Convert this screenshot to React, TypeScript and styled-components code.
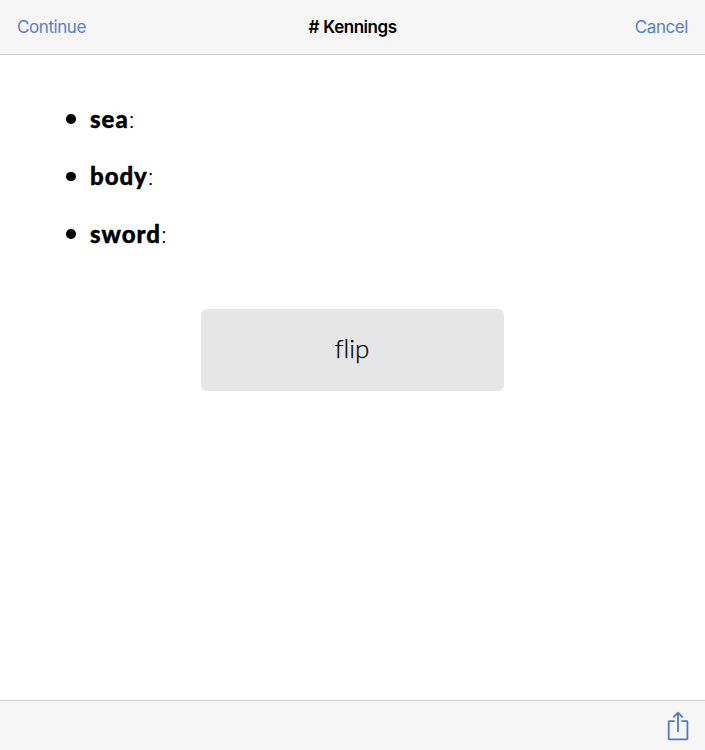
import React from "react";
import styled, { createGlobalStyle } from "styled-components";

const GlobalStyle = createGlobalStyle`
  * { box-sizing: border-box; }
  body { margin: 0; background: #fff; color: #000; }
`;

const Screen = styled.div`
  display: flex;
  flex-direction: column;
  height: 100vh;
  min-height: 750px;
  background: #fff;
  font-family: Inter, "Liberation Sans", sans-serif;
`;

const NavBar = styled.header`
  display: grid;
  grid-template-columns: 1fr auto 1fr;
  align-items: center;
  height: 55px;
  padding: 0 17px;
  background: #f6f6f6;
  border-bottom: 1px solid #cfcfcf;
`;

const NavButton = styled.button<{ $end?: boolean }>`
  justify-self: ${({ $end }) => ($end ? "end" : "start")};
  padding: 0;
  border: 0;
  background: none;
  color: #5580cb;
  font: 400 17px/22px Inter, sans-serif;
  letter-spacing: -0.42px;
`;

const Title = styled.h1`
  margin: 0;
  font-size: 17px;
  line-height: 22px;
  font-weight: 600;
  letter-spacing: -0.46px;
  word-spacing: 0.6px;
`;

const Content = styled.main`
  flex: 1;
  padding-top: 48.9px;
  font-family: Lato, sans-serif;
`;

const KenningList = styled.ul`
  display: grid;
  gap: 27.5px;
  margin: 0;
  padding: 0 0 0 66px;
  list-style: none;
`;

const Kenning = styled.li`
  display: flex;
  align-items: center;
  height: 30px;
  font-size: 24px;
  line-height: 30px;
  font-weight: 300;
`;

const Bullet = styled.span`
  width: 9.5px;
  height: 9.5px;
  margin-right: 14.5px;
  border-radius: 50%;
  background: #000;
`;

const Word = styled.b`
  font-weight: 900;
  letter-spacing: 0.95px;
  -webkit-text-stroke: 0.4px #000;
`;

const FlipButton = styled.button`
  display: block;
  width: 303px;
  height: 82px;
  margin: 60px auto 0;
  padding: 0 1px 3px 0;
  border: 0;
  border-radius: 6px;
  background: #e6e6e6;
  color: #000;
  font: 300 26px/32px Lato, sans-serif;
  font-variant-ligatures: none;
  letter-spacing: -0.1px;
  -webkit-text-stroke: 0.25px #000;
`;

const Toolbar = styled.footer`
  display: flex;
  align-items: center;
  justify-content: flex-end;
  height: 50px;
  padding-right: 16px;
  background: #f6f6f6;
  border-top: 1px solid #cfcfcf;
`;

const ShareButton = styled.button`
  display: flex;
  padding: 0;
  border: 0;
  background: none;
  color: #5079cc;
`;

const words = ["sea", "body", "sword"];

export default function App() {
  return (
    <Screen>
      <GlobalStyle />
      <NavBar>
        <NavButton>Continue</NavButton>
        <Title># Kennings</Title>
        <NavButton $end>Cancel</NavButton>
      </NavBar>
      <Content>
        <KenningList>
          {words.map((word) => (
            <Kenning key={word}>
              <Bullet />
              <Word>{word}</Word>:
            </Kenning>
          ))}
        </KenningList>
        <FlipButton>flip</FlipButton>
      </Content>
      <Toolbar>
        <ShareButton aria-label="Share">
          <svg width="22" height="30" viewBox="0 0 22 30" fill="none" stroke="currentColor" strokeWidth="1.8" strokeLinejoin="round">
            <path d="M7.8 10.2H2.2Q1.7 10.2 1.7 10.7V27.8Q1.7 28.3 2.2 28.3H19.9Q20.4 28.3 20.4 27.8V10.7Q20.4 10.2 19.9 10.2H14.3M11 21V1.5M6.3 6.4L11 1.6L15.7 6.4" />
          </svg>
        </ShareButton>
      </Toolbar>
    </Screen>
  );
}
